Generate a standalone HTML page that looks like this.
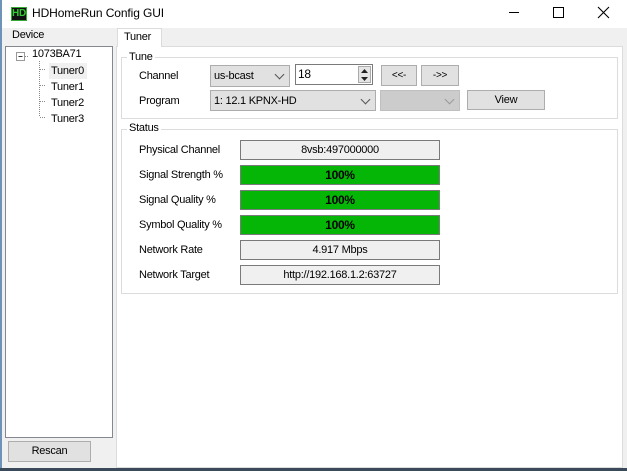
<!DOCTYPE html>
<html><head><meta charset="utf-8"><style>
*{box-sizing:border-box;margin:0;padding:0}
body{width:627px;height:471px;overflow:hidden;background:#f0f0f0;font-family:"Liberation Sans",sans-serif;font-size:11px;letter-spacing:-0.25px;color:#000;position:relative}
.a{position:absolute}
.t{white-space:nowrap}
.fld{position:absolute;border:1px solid #7a7a7a;background:#f0f0f0;text-align:center;line-height:18px;height:20px}
.g{background:#06b606;font-weight:bold;font-size:12px}
.btn{position:absolute;border:1px solid #adadad;background:#e1e1e1;text-align:center}
.grp{position:absolute;border:1px solid #dcdcdc}
.cmb{position:absolute;border:1px solid #adadad;background:#e1e1e1}
.chev{position:absolute;right:6px;top:5px;width:7px;height:7px;border-right:1px solid #555;border-bottom:1px solid #555;transform:rotate(45deg)}
</style></head><body>
<div class="a" style="left:0;top:0;width:627px;height:28px;background:#fff"></div>
<div class="a" style="left:0;top:0;width:2px;height:471px;background:#6d93b8"></div>
<div class="a" style="left:11px;top:7px;width:16px;height:14px;background:#111;border:1px solid #3a3"></div>
<div class="a t" style="left:12px;top:7px;font-size:10px;font-weight:bold;color:#3c3;line-height:14px">HD</div>
<div class="a t" style="left:32px;top:5px;font-size:12px;letter-spacing:-0.1px;line-height:16px">HDHomeRun Config GUI</div>
<div class="a" style="left:509px;top:12px;width:10px;height:1px;background:#000"></div>
<div class="a" style="left:553px;top:7px;width:11px;height:11px;border:1px solid #000"></div>
<svg class="a" style="left:597px;top:6px" width="13" height="13"><path d="M1 1L12 12M12 1L1 12" stroke="#000" stroke-width="1.1"/></svg>

<div class="a t" style="left:12px;top:29px">Device</div>
<div class="a" style="left:5px;top:46px;width:108px;height:392px;background:#fff;border:1px solid #828790"></div>
<svg class="a" style="left:15px;top:49px" width="40" height="80">
<rect x="1.5" y="3.5" width="8" height="8" fill="#fff" stroke="#999"/><path d="M3.5 7.5h4" stroke="#333"/>
<path d="M10 7.5h4M24.5 12v56M25 20.5h6M25 36.5h6M25 52.5h6M25 68.5h6" stroke="#888" stroke-dasharray="1 1"/>
</svg>
<div class="a t" style="left:32px;top:48px">1073BA71</div>
<div class="a" style="left:49px;top:63px;width:38px;height:16px;background:#f0f0f0"></div>
<div class="a t" style="left:51px;top:65px">Tuner0</div>
<div class="a t" style="left:51px;top:81px">Tuner1</div>
<div class="a t" style="left:51px;top:97px">Tuner2</div>
<div class="a t" style="left:51px;top:113px">Tuner3</div>
<div class="btn" style="left:8px;top:441px;width:83px;height:21px;line-height:19px">Rescan</div>

<div class="a" style="left:116px;top:46px;width:507px;height:422px;background:#fff;border:1px solid #dcdcdc"></div>
<div class="a" style="left:117px;top:28px;width:45px;height:19px;background:#fff;border:1px solid #dcdcdc;border-bottom:none"></div>
<div class="a t" style="left:124px;top:31px">Tuner</div>

<div class="grp" style="left:121px;top:57px;width:497px;height:62px"></div>
<div class="a t" style="left:127px;top:51px;background:#fff;padding:0 2px">Tune</div>
<div class="a t" style="left:139px;top:70px">Channel</div>
<div class="cmb" style="left:210px;top:65px;width:80px;height:22px"><span class="a t" style="left:3px;top:4px">us-bcast</span><div class="chev"></div></div>
<div class="a" style="left:295px;top:64px;width:78px;height:21px;border:1px solid #7a7a7a;background:#fff"><span class="a t" style="left:2px;top:2px;font-size:12px">18</span>
<div class="a" style="right:1px;top:1px;width:13px;height:17px;background:#e5e5e5;border:1px solid #aaa"></div>
<svg class="a" style="right:3px;top:3px" width="9" height="14"><path d="M1 5L4.5 1L8 5ZM1 9L4.5 13L8 9Z" fill="#222"/></svg></div>
<div class="btn" style="left:381px;top:65px;width:36px;height:21px;line-height:19px;font-size:10px">&lt;&lt;-</div>
<div class="btn" style="left:421px;top:65px;width:38px;height:21px;line-height:19px;font-size:10px">-&gt;&gt;</div>
<div class="a t" style="left:139px;top:95px">Program</div>
<div class="cmb" style="left:210px;top:90px;width:166px;height:21px"><span class="a t" style="left:3px;top:4px">1: 12.1 KPNX-HD</span><div class="chev"></div></div>
<div class="cmb" style="left:380px;top:90px;width:80px;height:21px;background:#cccccc;border-color:#bfbfbf"><div class="chev" style="border-color:#999"></div></div>
<div class="btn" style="left:467px;top:90px;width:78px;height:20px;line-height:18px">View</div>

<div class="grp" style="left:121px;top:129px;width:497px;height:165px"></div>
<div class="a t" style="left:127px;top:122px;background:#fff;padding:0 2px">Status</div>
<div class="a t" style="left:139px;top:144px">Physical Channel</div>
<div class="fld" style="left:240px;top:140px;width:200px">8vsb:497000000</div>
<div class="a t" style="left:139px;top:169px">Signal Strength %</div>
<div class="fld g" style="left:240px;top:165px;width:200px">100%</div>
<div class="a t" style="left:139px;top:194px">Signal Quality %</div>
<div class="fld g" style="left:240px;top:190px;width:200px">100%</div>
<div class="a t" style="left:139px;top:219px">Symbol Quality %</div>
<div class="fld g" style="left:240px;top:215px;width:200px">100%</div>
<div class="a t" style="left:139px;top:244px">Network Rate</div>
<div class="fld" style="left:240px;top:240px;width:200px">4.917 Mbps</div>
<div class="a t" style="left:139px;top:269px">Network Target</div>
<div class="fld" style="left:240px;top:265px;width:200px">http://192.168.1.2:63727</div>

<div class="a" style="left:0;top:468px;width:627px;height:3px;background:#3a4a5a"></div>
</body></html>
